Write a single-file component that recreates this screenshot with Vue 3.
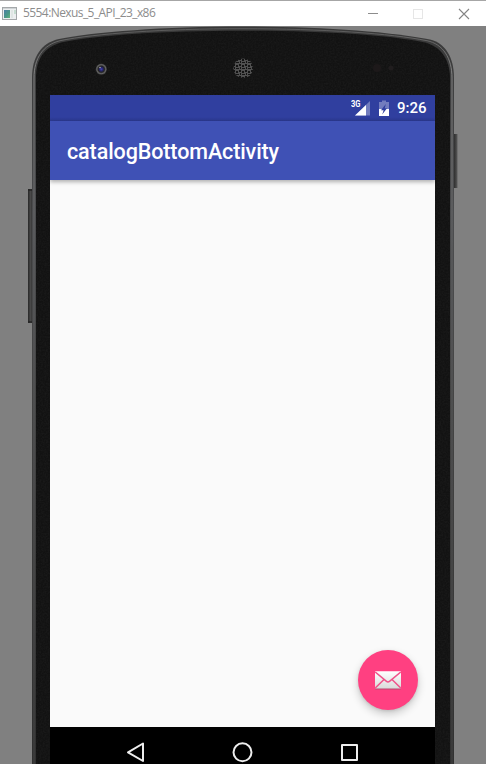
<script setup>
const title = '5554:Nexus_5_API_23_x86'
</script>

<template>
  <div class="window">
    <header class="titlebar">
      <svg class="app-icon" width="16" height="14" viewBox="0 0 16 14">
        <defs>
          <linearGradient id="appg" x1="0" y1="0" x2="1" y2="1">
            <stop offset="0" stop-color="#4d7fa6" /><stop offset=".6" stop-color="#4a9a86" /><stop offset="1" stop-color="#6ab47c" />
          </linearGradient>
        </defs>
        <rect x=".5" y=".5" width="14" height="12" fill="#eceff0" stroke="#a4a8aa" />
        <rect x="1" y="1" width="13" height="1" fill="#cfd3d5" />
        <rect x="2" y="3" width="6" height="8" fill="url(#appg)" />
        <rect x="9" y="3" width="2" height="8" fill="#dfe6e4" />
        <rect x="12" y="3" width="2" height="4" fill="#c5ddd0" />
      </svg>
      <span class="window-title">{{ title }}</span>
      <svg class="controls" width="104" height="12" viewBox="0 0 104 12" fill="none">
        <path d="M0 5.500H10" stroke="#8c8c8c" />
        <rect x="45.500" y="1.500" width="9" height="9" stroke="#e6e6e6" />
        <path d="M91 1L101 11M101 1L91 11" stroke="#858585" stroke-width="1.100" />
      </svg>
    </header>

    <main class="stage">
      <svg class="shell" width="486" height="738" viewBox="0 26 486 738">
        <defs>
          <linearGradient id="side"><stop offset="0" stop-color="#272727" /><stop offset=".5" stop-color="#484848" /><stop offset="1" stop-color="#2c2c2c" /></linearGradient>
          <linearGradient id="sideRight"><stop offset="0" stop-color="#262626" /><stop offset=".5" stop-color="#3c3c3c" /><stop offset="1" stop-color="#5a5a5a" /></linearGradient>
          <linearGradient id="rim" x1="0" y1="0" x2="0" y2="1">
            <stop offset="0" stop-color="#383838" /><stop offset=".25" stop-color="#4c4d4f" /><stop offset=".5" stop-color="#444" /><stop offset="1" stop-color="#303030" />
          </linearGradient>
          <linearGradient id="shine" x1="0" y1="0" x2="0" y2="1">
            <stop offset="0" stop-color="#5a5a5a" /><stop offset=".06" stop-color="#858585" /><stop offset=".3" stop-color="#626365" /><stop offset="1" stop-color="#414141" />
          </linearGradient>
          <filter id="noise" x="0" y="0" width="1" height="1">
            <feTurbulence type="fractalNoise" baseFrequency=".6" numOctaves="2" seed="4" />
            <feColorMatrix values="0 0 0 0 1  0 0 0 0 1  0 0 0 0 1  .06 0 0 0 -.02" />
            <feComposite in2="SourceGraphic" operator="in" />
          </filter>
          <radialGradient id="lens"><stop offset="0" stop-color="#4646b4" /><stop offset=".3" stop-color="#25256e" /><stop offset=".55" stop-color="#222" /><stop offset=".8" stop-color="#656565" /><stop offset="1" stop-color="#333" /></radialGradient>
          <pattern id="mesh" x="233" y="58" width="6" height="6" patternUnits="userSpaceOnUse">
            <rect width="6" height="6" fill="#505050" />
            <path d="M0 0h2v2H0zM3 1h2v2H3zM1 3h1v2H1zM3 4h2v1H3zM5 4h1v1H5z" fill="#141414" />
          </pattern>
        </defs>
        <rect x="28" y="189" width="5" height="134" fill="url(#side)" />
        <path d="M28 190H32M28 322H32" stroke="#252525" stroke-width="1.500" />
        <rect x="453" y="134" width="4.500" height="54" fill="url(#sideRight)" />
        <path d="M32 770V78C32 57 41 43 59 39C94 32 163 26.500 243 26.500C323 26.500 392 32 430 39.500C445 43 454 57 454 78V770Z" fill="url(#rim)" />
        <path d="M34 770V78C34 58 43 45 60 40.700C95 33.500 163 28.700 243 28.700C323 28.700 391 33.500 427 40.700C443 44 452 58 452 78V770" fill="none" stroke="url(#shine)" stroke-width="1" />
        <path d="M36 770V78C36 59 44 47 62 42.200C97 35 164 30.700 243 30.700C322 30.700 389 35 424 42.200C441 46 450 60 450 78V770Z" fill="#121212" />
        <path d="M36 770V78C36 59 44 47 62 42.200C97 35 164 30.700 243 30.700C322 30.700 389 35 424 42.200C441 46 450 60 450 78V770Z" filter="url(#noise)" />
        <circle cx="101.300" cy="69.200" r="5.600" fill="url(#lens)" />
        <circle cx="100" cy="67.500" r=".8" fill="#aaa" />
        <circle cx="243.200" cy="68.200" r="9.800" fill="url(#mesh)" />
        <circle cx="377" cy="68" r="4" fill="#1d191a" />
        <circle cx="391" cy="68" r="2.500" fill="#201d1e" />
      </svg>

      <section class="screen">
        <div class="status">
          <svg width="40" height="20" viewBox="0 -2 40 20">
            <path d="M19 1V15.500H4Z" fill="#fff" fill-opacity=".32" />
            <path d="M15 5V15.500H4Z" fill="#fff" />
            <text x="0" y="7.300" class="network" textLength="9.500" lengthAdjust="spacingAndGlyphs">3G</text>
            <path d="M28 2H31V.5H35V2H38V16H28Z" fill="#fff" fill-opacity=".32" />
            <path d="M28 9H38V16H28Z" fill="#fff" />
            <path d="M34.800 4L30 10.300H32.600L31.200 14.500L36 8.300H33.800Z" fill="#303f9f" />
          </svg>
          <span class="clock">9:26</span>
        </div>
        <div class="appbar"><h1>catalogBottomActivity</h1></div>
        <div class="content">
          <button class="fab" aria-label="Email">
            <svg width="26" height="19" viewBox="0 0 26 19">
              <defs><linearGradient id="mail" x1="0" y1="0" x2="0" y2="1"><stop offset="0" stop-color="#fff" /><stop offset="1" stop-color="#dadada" /></linearGradient></defs>
              <rect y="1" width="26" height="17.500" rx=".7" fill="#b54b70" />
              <rect y=".3" width="26" height="17.200" rx=".7" fill="url(#mail)" />
              <path d="M.3 1L11.500 10.300Q13 11.500 14.500 10.300L25.700 1M.3 17L9 8.500M25.700 17L17 8.500" fill="none" stroke="#f0528a" stroke-width="1.500" />
            </svg>
          </button>
        </div>
        <nav class="navbar">
          <svg width="385" height="37" viewBox="0 0 385 37" fill="none" stroke="#eee" stroke-width="2">
            <path d="M93 16.500V34L78 25.300Z" stroke-linejoin="round" />
            <circle cx="192.500" cy="25.300" r="9" />
            <rect x="292" y="18" width="15" height="15" stroke-linejoin="round" />
          </svg>
        </nav>
      </section>
    </main>
  </div>
</template>

<style>
body { margin: 0; overflow: hidden; }
</style>

<style scoped>
.window { width: 486px; height: 764px; display: flex; flex-direction: column; overflow: hidden; background: #808080; }
.titlebar { box-sizing: border-box; height: 26px; flex: none; display: flex; align-items: center; padding: 0 14px 0 2px; background: #fff; border-top: 1px solid #a6a6a6; }
.app-icon { flex: none; }
.window-title { margin: -1px 0 0 5px; font: 12px/24px "Open Sans", "Noto Sans", sans-serif; color: #8c8c8c; white-space: nowrap; letter-spacing: -.58px; }
.controls { margin-left: auto; }
.stage { position: relative; flex: 1; display: flex; padding: 69px 51px 0 50px; background: #808080; }
.shell { position: absolute; left: 0; top: 0; }
.screen { position: relative; width: 385px; height: 669px; display: flex; flex-direction: column; background: #fafafa; overflow: hidden; }
.status { box-sizing: border-box; height: 26px; flex: none; display: flex; align-items: center; justify-content: flex-end; gap: 6px; padding: 0 8.500px 0 0; background: linear-gradient(#303f9f 22px, #2b398f); }
.network { font: bold 9.500px Roboto, sans-serif; fill: #fff; }
.clock { font: 500 15px/26px Roboto, sans-serif; color: #fff; }
.appbar { height: 59px; flex: none; display: flex; align-items: center; padding: 0 17px; background: #3f51b5; box-shadow: 0 2px 4px rgba(0,0,0,.3); z-index: 1; }
h1 { margin: 2px 0 0; font: 500 21.500px/28px Roboto, sans-serif; letter-spacing: -.1px; color: #fff; white-space: nowrap; }
.content { flex: 1; display: flex; align-items: flex-end; justify-content: flex-end; padding: 0 17px 17px 0; background: #fafafa; }
.fab { width: 60px; height: 60px; border: 0; border-radius: 50%; padding: 0; display: flex; align-items: center; justify-content: center; background: #ff4081; box-shadow: 0 4px 9px rgba(0,0,0,.2), 0 1px 3px rgba(0,0,0,.1); }
.navbar { height: 37px; flex: none; background: #000; }
.navbar svg { display: block; }
</style>
